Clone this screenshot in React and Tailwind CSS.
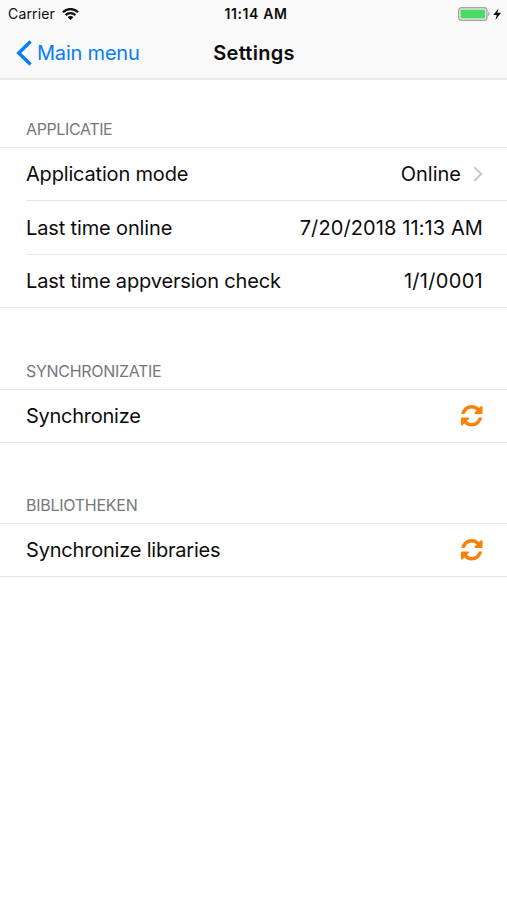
import React from "react";

const SECTIONS = [
  {
    title: "APPLICATIE",
    spacing: "pt-[38px] h-[67px]",
    tracking: "tracking-[-0.38px]",
    rows: [
      {
        label: "Application mode",
        value: "Online",
        chevron: true,
        height: "h-[53px]",
        tracking: "tracking-[-0.18px]",
        valueTracking: "tracking-[0px]",
      },
      {
        label: "Last time online",
        value: "7/20/2018 11:13 AM",
        height: "h-[54px]",
        tracking: "tracking-[-0.14px]",
        valueTracking: "tracking-[0.1px]",
      },
      {
        label: "Last time appversion check",
        value: "1/1/0001",
        height: "h-[52px]",
        tracking: "tracking-[-0.16px]",
        valueTracking: "tracking-[0.3px]",
      },
    ],
  },
  {
    title: "SYNCHRONIZATIE",
    spacing: "pt-[52px] h-[81px]",
    tracking: "tracking-[-0.3px]",
    rows: [{ label: "Synchronize", sync: true, height: "h-[52px]", tracking: "tracking-[-0.26px]" }],
  },
  {
    title: "BIBLIOTHEKEN",
    spacing: "pt-[51px] h-[80px]",
    tracking: "tracking-[-0.26px]",
    rows: [{ label: "Synchronize libraries", sync: true, height: "h-[52px]", tracking: "tracking-[-0.2px]" }],
  },
];

const WifiIcon = () => (
  <svg className="ml-[7px] h-[12px] w-[17px]" viewBox="0 0 17 12" fill="none" stroke="#111" strokeWidth="2.3">
    <path d="M.9 4.200a10.800 10.800 0 0 1 15.200 0" />
    <path d="M3.600 7.100a6.900 6.900 0 0 1 9.800 0" />
    <path d="M8.500 12 5.600 9.300a4 4 0 0 1 5.800 0z" fill="#111" stroke="none" />
  </svg>
);

const BatteryIcon = () => (
  <svg className="h-[14px] w-[44px]" viewBox="0 0 44 14">
    <rect x="0.7" y="0.7" width="28.2" height="12.6" rx="2.8" fill="#fff" stroke="#a5a5a8" strokeWidth="1.4" />
    <rect x="2.4" y="2.4" width="24.8" height="9.200" rx="0.8" fill="#4cd964" />
    <path d="M30.200 4.800c1.800.5 1.800 3.700 0 4.200z" fill="#a5a5a8" />
    <path d="M40.500 1.400 35.200 8h3.500l-1.300 5 5.600-7.200h-3.600z" fill="#111" />
  </svg>
);

const SyncIcon = () => (
  <svg className="mr-[0.5px] h-[21.5px] w-[21.5px]" viewBox="0 0 1536 1536" fill="#fb8205">
    <path d="M1511 928q0 5-1 7-64 268-268 434.500t-478 166.500q-146 0-282.500-55t-243.500-157l-129 129q-19 19-45 19t-45-19-19-45v-448q0-26 19-45t45-19h448q26 0 45 19t19 45-19 45l-137 137q71 66 161 102t187 36q134 0 250-65t186-179q11-17 53-117 8-23 30-23h192q13 0 22.500 9.500t9.500 22.500zm25-800v448q0 26-19 45t-45 19h-448q-26 0-45-19t-19-45 19-45l138-138q-148-137-349-137-134 0-250 65t-186 179q-11 17-53 117-8 23-30 23h-199q-13 0-22.500-9.500t-9.500-22.500v-7q65-268 270-434.500t480-166.500q146 0 284 55.500t245 156.500l130-129q19-19 45-19t45 19 19 45z" />
  </svg>
);

const Row = ({ row, last }) => (
  <div className="pl-[26px]">
    <div
      className={`flex items-center justify-between pr-[24px] ${row.height} ${
        last ? "" : "border-b border-[#e8e8ea]"
      }`}
    >
      <span className={row.tracking}>{row.label}</span>
      {row.sync && <SyncIcon />}
      {row.value && (
        <span className={`flex items-center ${row.valueTracking}`}>
          {row.value}
          {row.chevron && (
            <svg className="ml-[12px] h-[16px] w-[10px]" viewBox="0 0 10 16" fill="none" stroke="#c7c7cc" strokeWidth="2">
              <path d="m1.300 1.200 7 6.800-7 6.800" />
            </svg>
          )}
        </span>
      )}
    </div>
  </div>
);

const App = () => (
  <div className="min-h-screen bg-white font-['Inter',sans-serif] text-[20px] text-[#0c0c0c]">
    <header className="h-[80px] border-b-2 border-[#ebebec] bg-[#f9f9f9]">
      {/* Status bar */}
      <div className="grid h-[27px] grid-cols-3 items-center pl-[8px] pr-[5px] text-[14px]">
        <div className="flex items-center tracking-[0.15px]">
          Carrier
          <WifiIcon />
        </div>
        <div className="pl-[2px] text-center font-semibold tracking-[0.6px]">11:14 AM</div>
        <div className="flex justify-end">
          <BatteryIcon />
        </div>
      </div>

      {/* Navigation bar */}
      <div className="grid h-[51px] grid-cols-3 items-center px-[16px]">
        <button className="flex items-center whitespace-nowrap tracking-[-0.2px] text-[#087df8]">
          <svg className="mr-[5px] h-[26px] w-[16px]" viewBox="0 0 16 26" fill="none" stroke="currentColor" strokeWidth="3.400">
            <path d="M14.600 1.500 2.700 13l11.900 11.500" />
          </svg>
          Main menu
        </button>
        <h1 className="pl-[1px] text-center font-semibold tracking-[0.25px]">Settings</h1>
      </div>
    </header>

    <main>
      {SECTIONS.map((section) => (
        <section key={section.title}>
          <h2 className={`pl-[26px] text-[16px] leading-[22px] text-[#77777b] ${section.spacing} ${section.tracking}`}>
            {section.title}
          </h2>
          <div className="border-y border-[#e8e8ea]">
            {section.rows.map((row, i) => (
              <Row key={row.label} row={row} last={i === section.rows.length - 1} />
            ))}
          </div>
        </section>
      ))}
    </main>
  </div>
);

export default App;
